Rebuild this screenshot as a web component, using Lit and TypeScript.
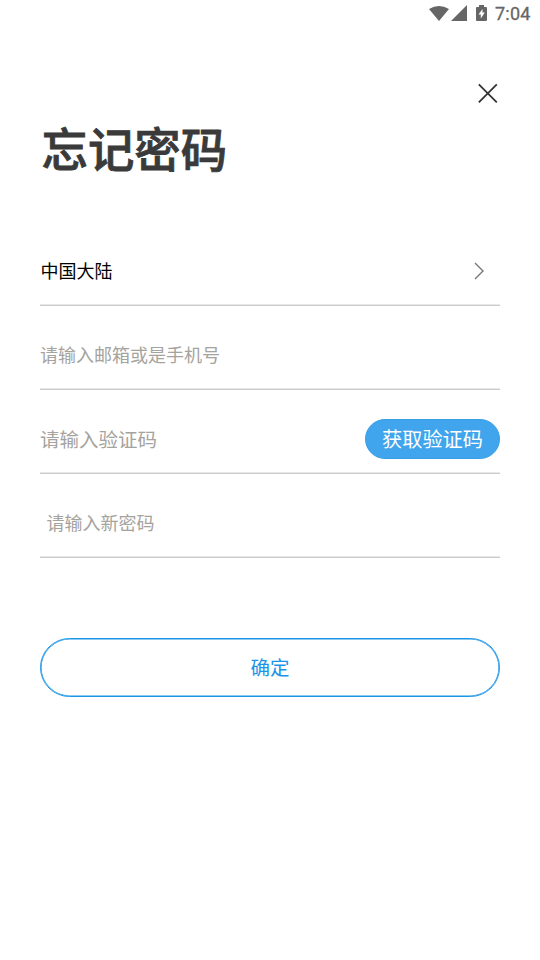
import { LitElement, html, css } from "lit";
import { customElement } from "lit/decorators.js";

@customElement("app-root")
export class AppRoot extends LitElement {
  static styles = css`
    :host { display: flex; flex-direction: column; box-sizing: border-box; width: 540px; height: 960px; overflow: hidden; background: #fff; font-family: "Noto Sans CJK SC", sans-serif; color: #333; }
    .status { height: 27px; display: flex; align-items: center; justify-content: flex-end; padding-right: 9px; box-sizing: border-box; flex: none; }
    .status svg { display: block; }
    .time { font: 400 18px/27px Roboto, sans-serif; -webkit-text-stroke: 0.3px #666; color: #666; margin-left: 7px; height: 27px; width: 36px; white-space: nowrap; letter-spacing: 0.25px; }
    .top { height: 93px; flex: none; display: flex; justify-content: flex-end; padding: 56px 42px 0 0; box-sizing: border-box; }
    main { padding: 0 40px; display: flex; flex-direction: column; }
    h1 { margin: -3px 0 0; height: 105px; padding-left: 1.5px; font-size: 46.4px; line-height: 60px; font-weight: 500; -webkit-text-stroke: 0.8px #3a3a3a; color: #3a3a3a; white-space: nowrap; }
    .row { height: 84px; box-sizing: border-box; border-bottom: 1px solid #ccc; box-shadow: inset 0 -1px 0 #e8e8e8; display: flex; align-items: center; justify-content: space-between; font-size: 18px; color: #a5a39e; padding-top: 12px; }
    .region { color: #000; padding-right: 14px; }
    .region span { padding-left: 0.5px; }
    .region svg { margin-top: 2px; }
    .code { font-size: 19.5px; padding-top: 14px; }
    .code span { margin-top: -1px; }
    .indent { padding-left: 6.5px; }
    .get { box-sizing: border-box; width: 135px; height: 40px; border-radius: 20px; border: 1px solid #389fe7; background: #40a5ec; color: #fff; font: inherit; font-size: 20.2px; line-height: 37px; padding: 0; }
    .ok { margin-top: 80px; height: 59px; border: 1px solid #1a94e6; border-radius: 30px; background: #fff; color: #1a94e6; font: inherit; font-size: 19.5px; padding: 0 0 2px; box-shadow: inset 0 0 0 0.6px #1a94e6; }
  `;
  render() {
    return html`
      <div class="status">
        <svg width="60" height="20" viewBox="0 0 60 20" fill="#666"><path d="M1 5Q11-1 21 5L11 17ZM39 1V17H23Z"/><path fill-rule="evenodd" d="M49 3h2V1h5v2h2q1 0 1 1v12q0 1-1 1h-9q-1 0-1-1V4q0-1 1-1ZM54.5 5l-4 5.5h2.3v4l4-6H54.5Z"/></svg>
        <span class="time">7:04</span>
      </div>
      <div class="top"><svg width="20" height="20" viewBox="0 0 20 20" fill="none" stroke="#333" stroke-width="1.8"><path d="M.8 1.3 18.8 19.3M18.8 1.3 .8 19.3"/></svg></div>
      <main>
        <h1>忘记密码</h1>
        <div class="row region"><span>中国大陆</span><svg width="12" height="20" viewBox="0 0 12 20" fill="none" stroke="#777" stroke-width="1.4"><path d="m1 2 8 8-8 8"/></svg></div>
        <div class="row"><span>请输入邮箱或是手机号</span></div>
        <div class="row code"><span>请输入验证码</span><button class="get">获取验证码</button></div>
        <div class="row indent"><span>请输入新密码</span></div>
        <button class="ok">确定</button>
      </main>`;
  }
}
